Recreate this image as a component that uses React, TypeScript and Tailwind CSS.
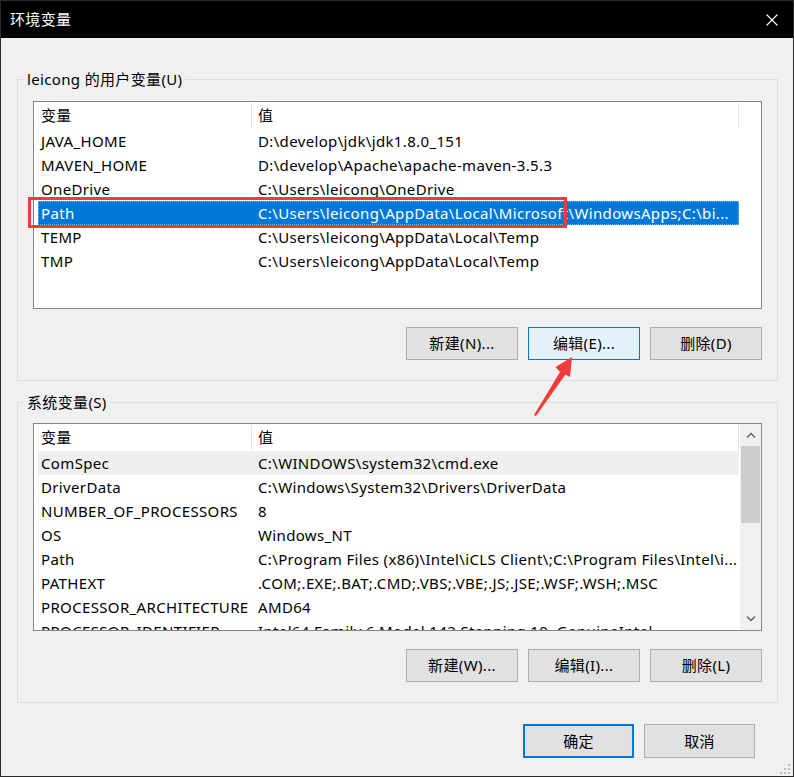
import React from "react";

type Row = { name: string; value: string; state?: "selected" | "hover" };

const userVars: Row[] = [
  { name: "JAVA_HOME", value: "D:\\develop\\jdk\\jdk1.8.0_151" },
  { name: "MAVEN_HOME", value: "D:\\develop\\Apache\\apache-maven-3.5.3" },
  { name: "OneDrive", value: "C:\\Users\\leicong\\OneDrive" },
  {
    name: "Path",
    value: "C:\\Users\\leicong\\AppData\\Local\\Microsoft\\WindowsApps;C:\\bi...",
    state: "selected",
  },
  { name: "TEMP", value: "C:\\Users\\leicong\\AppData\\Local\\Temp" },
  { name: "TMP", value: "C:\\Users\\leicong\\AppData\\Local\\Temp" },
];

const systemVars: Row[] = [
  { name: "ComSpec", value: "C:\\WINDOWS\\system32\\cmd.exe", state: "hover" },
  { name: "DriverData", value: "C:\\Windows\\System32\\Drivers\\DriverData" },
  { name: "NUMBER_OF_PROCESSORS", value: "8" },
  { name: "OS", value: "Windows_NT" },
  {
    name: "Path",
    value: "C:\\Program Files (x86)\\Intel\\iCLS Client\\;C:\\Program Files\\Intel\\i...",
  },
  { name: "PATHEXT", value: ".COM;.EXE;.BAT;.CMD;.VBS;.VBE;.JS;.JSE;.WSF;.WSH;.MSC" },
  { name: "PROCESSOR_ARCHITECTURE", value: "AMD64" },
  { name: "PROCESSOR_IDENTIFIER", value: "Intel64 Family 6 Model 142 Stepping 10, GenuineIntel" },
];

function VarRow({ row }: { row: Row }) {
  const bg =
    row.state === "selected"
      ? "bg-[#0078d7] text-white border border-dotted border-[#7fb9e9]"
      : row.state === "hover"
      ? "bg-[#efefef] border border-transparent"
      : "border border-transparent";
  return (
    <div className={`ml-[4px] flex h-[24px] w-[701px] shrink-0 items-center whitespace-nowrap ${bg}`}>
      <div className="w-[213px] shrink-0 overflow-hidden pl-[2px]">{row.name}</div>
      <div className="min-w-0 flex-1 overflow-hidden pl-[6px]">{row.value}</div>
    </div>
  );
}

function Chevron({ up }: { up?: boolean }) {
  return (
    <svg width="10" height="6" viewBox="0 0 10 6" className="text-[#606060]">
      <path
        d={up ? "M1 5.5 L5 1.5 L9 5.5" : "M1 0.5 L5 4.5 L9 0.5"}
        fill="none"
        stroke="currentColor"
        strokeWidth="1.3"
      />
    </svg>
  );
}

function VarList({ rows, scroll }: { rows: Row[]; scroll?: boolean }) {
  return (
    <div className="flex h-[208px] overflow-hidden border border-[#828790] bg-white">
      <div className="flex w-[706px] shrink-0 flex-col overflow-hidden">
        <div className="flex h-[27px] shrink-0">
          <div className="flex w-[217px] items-center pl-[7px]">变量</div>
          <div className="mt-[1px] h-[25px] w-px bg-[#e5e5e5]" />
          <div className="flex w-[486px] items-center pl-[6px]">值</div>
          <div className="mt-[1px] h-[25px] w-px bg-[#e5e5e5]" />
        </div>
        {rows.map((r) => (
          <VarRow key={r.name} row={r} />
        ))}
      </div>
      {scroll && (
        <div className="flex w-[21px] flex-col bg-[#f0f0f0]">
          <div className="flex h-[22px] items-center justify-center">
            <Chevron up />
          </div>
          <div className="mx-[1px] h-[77px] bg-[#cdcdcd]" />
          <div className="flex-1" />
          <div className="flex h-[22px] items-center justify-center">
            <Chevron />
          </div>
        </div>
      )}
    </div>
  );
}

function Btn({ label, variant }: { label: string; variant?: "hot" }) {
  const look =
    variant === "hot"
      ? "border border-[#0078d7] bg-[#e5f1fb]"
      : "border border-[#adadad] bg-[#e1e1e1]";
  return (
    <div className={`flex h-[33px] w-[112px] items-center justify-center ${look}`}>{label}</div>
  );
}

function Group({
  title,
  rows,
  scroll,
  buttons,
  className,
}: {
  title: string;
  rows: Row[];
  scroll?: boolean;
  buttons: { label: string; variant?: "hot" }[];
  className: string;
}) {
  return (
    <fieldset className={`ml-[16px] w-[761px] border border-[#dcdcdc] px-[6px] pb-[20px] ${className}`}>
      <legend className="px-[3px] leading-[20px]">{title}</legend>
      <div className="px-[9px]">
        <VarList rows={rows} scroll={scroll} />
        <div className="mt-[18px] flex justify-end gap-[10px]">
          {buttons.map((b) => (
            <Btn key={b.label} label={b.label} variant={b.variant} />
          ))}
        </div>
      </div>
    </fieldset>
  );
}

export default function App() {
  return (
    <div className="relative flex h-[777px] w-[794px] flex-col overflow-hidden border border-[#2b2b2b] bg-[#f0f0f0] font-['Noto_Sans','Noto_Sans_CJK_SC',sans-serif] text-[15px] tracking-[0.35px] text-black">
      <div className="flex h-[37px] shrink-0 items-center justify-between bg-black pl-[9px] pr-[15px] text-white">
        <span>环境变量</span>
        <svg width="12" height="12" viewBox="0 0 12 12">
          <path d="M0.5 0.5 L11.5 11.5 M11.5 0.5 L0.5 11.5" stroke="white" strokeWidth="1.1" />
        </svg>
      </div>

      <Group
        title="leicong 的用户变量(U)"
        rows={userVars}
        className="mt-[31px] pt-[12px]"
        buttons={[{ label: "新建(N)..." }, { label: "编辑(E)...", variant: "hot" }, { label: "删除(D)" }]}
      />
      <Group
        title="系统变量(S)"
        rows={systemVars}
        scroll
        className="mt-[11px] pt-[11px]"
        buttons={[{ label: "新建(W)..." }, { label: "编辑(I)..." }, { label: "删除(L)" }]}
      />

      <div className="mt-[21px] flex justify-end gap-[10px] pr-[38px]">
        <div className="flex h-[34px] w-[111px] items-center justify-center border-2 border-[#0078d7] bg-[#e1e1e1]">
          确定
        </div>
        <div className="flex h-[34px] w-[111px] items-center justify-center border border-[#adadad] bg-[#e1e1e1]">
          取消
        </div>
      </div>

      {/* annotation overlay: red box + arrow, plus the size grip */}
      <svg className="pointer-events-none absolute left-[-1px] top-[-1px]" width="794" height="777">
        <rect x="29.5" y="198.5" width="536" height="28" fill="none" stroke="#ee3b3b" strokeWidth="3" />
        <polygon
          points="534,415 560,372 555.5,367 572,357 570,377 565.5,374.5 536,416"
          fill="#ee3b3b"
        />
        {[
          [788, 764],
          [784, 768],
          [788, 768],
          [780, 772],
          [784, 772],
          [788, 772],
        ].map(([x, y]) => (
          <rect key={`${x}-${y}`} x={x} y={y} width="2" height="2" fill="#bcbcbc" />
        ))}
      </svg>
    </div>
  );
}
